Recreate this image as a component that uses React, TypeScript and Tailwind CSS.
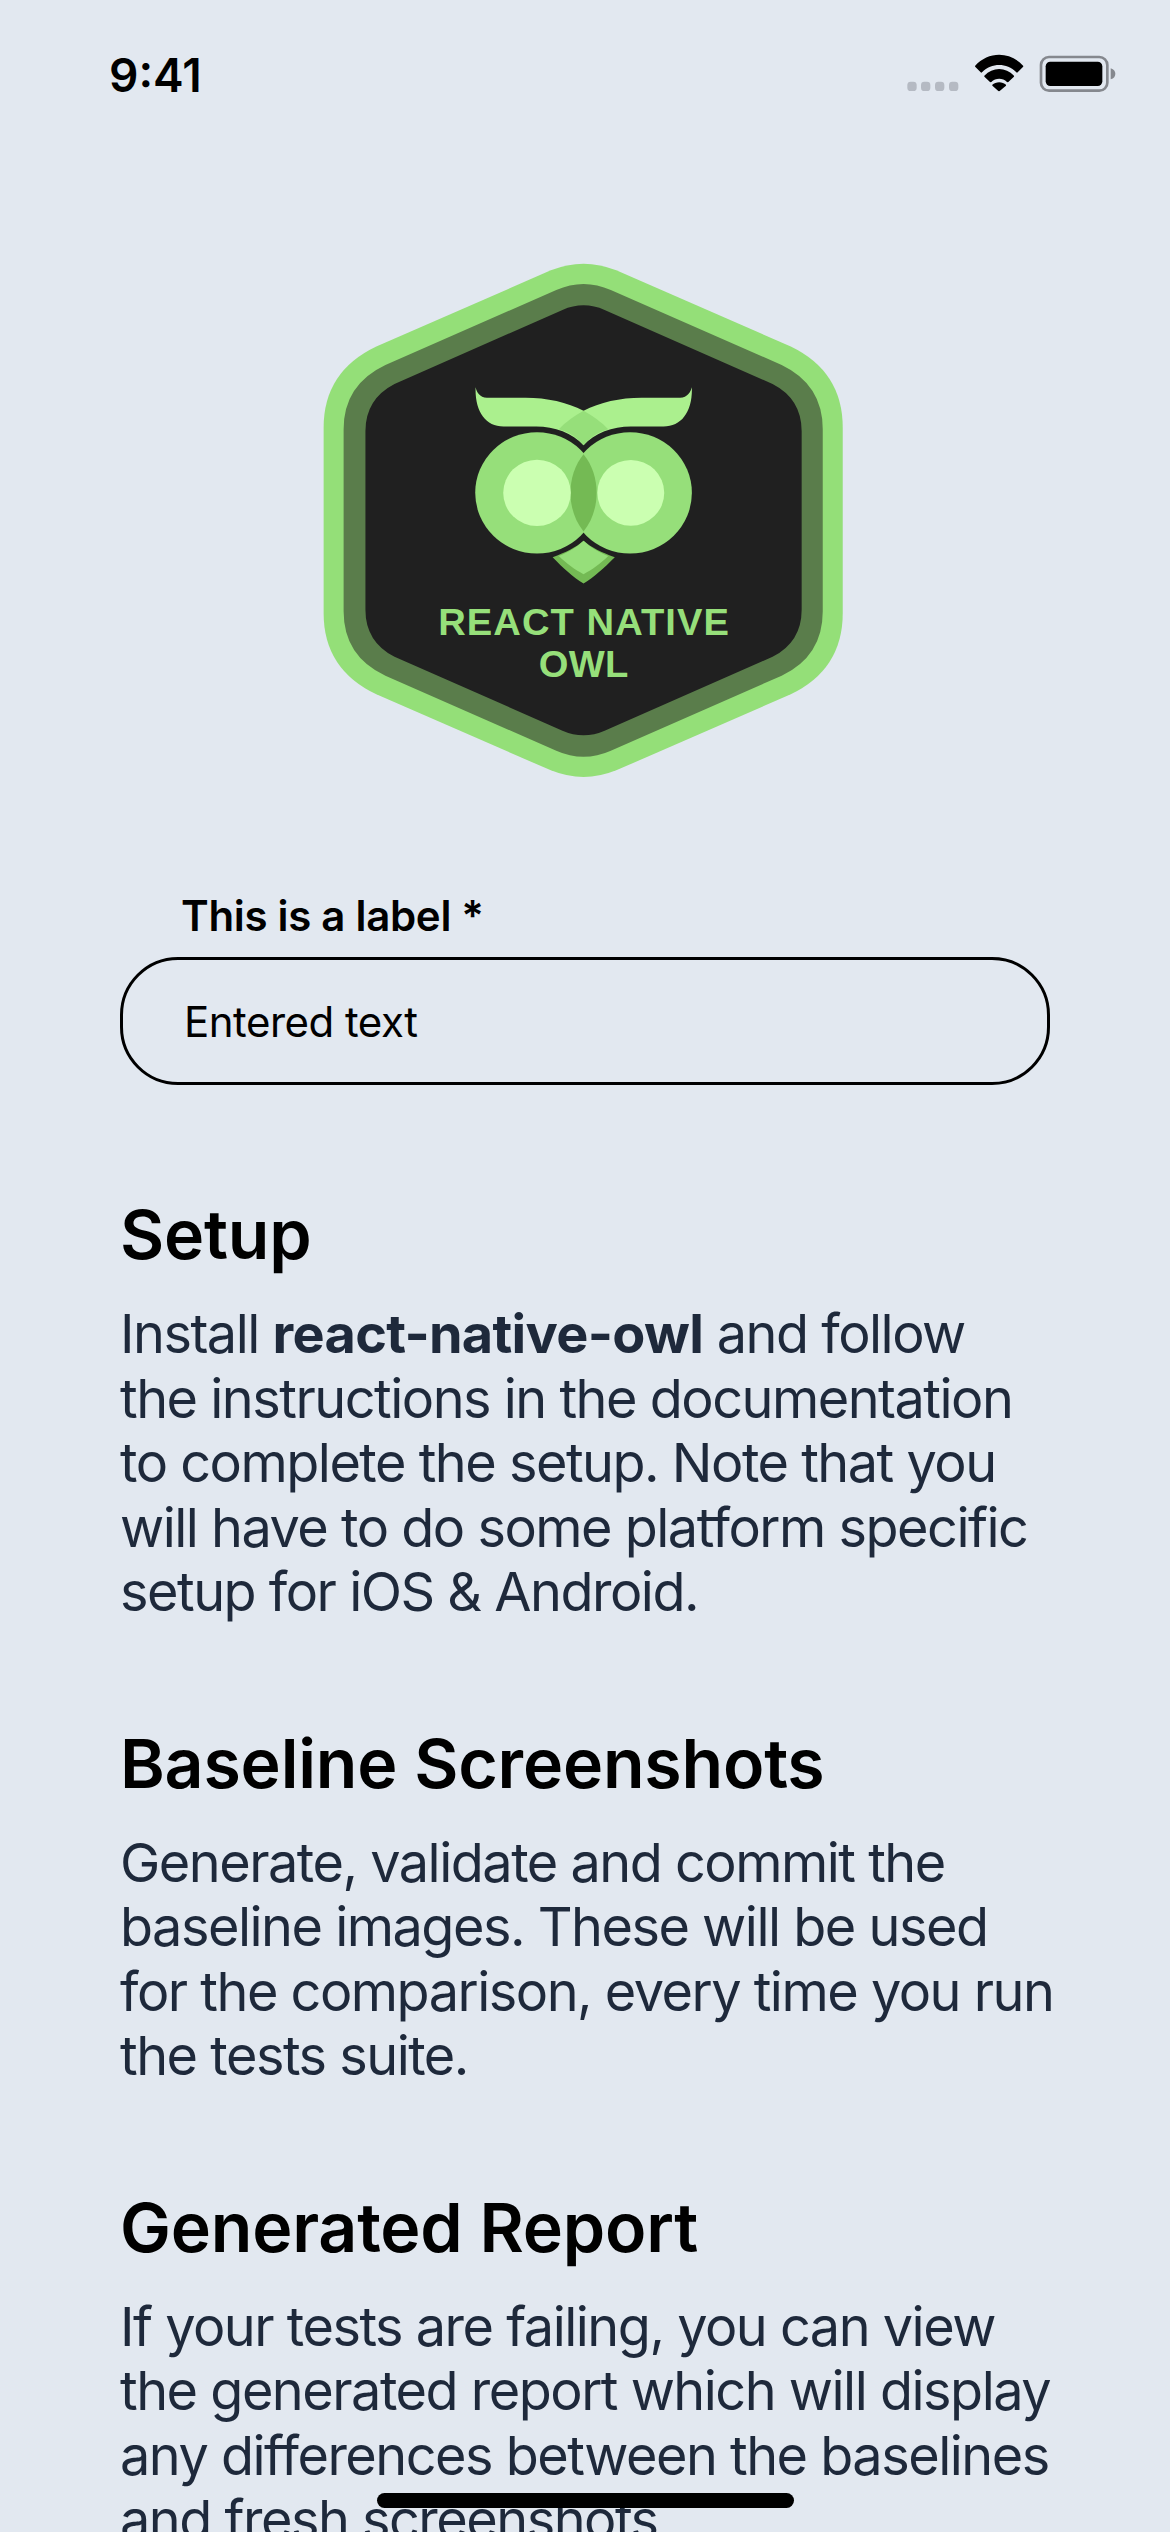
import React from "react"

function StatusIcons() {
  return (
    <svg width="280" height="80" viewBox="0 0 840 240" className="block">
      {/* signal dots */}
      <g fill="#B5BAC3">
        <rect x="142" y="155" width="28" height="28" rx="10" />
        <rect x="183" y="155" width="28" height="28" rx="10" />
        <rect x="225" y="155" width="28" height="28" rx="10" />
        <rect x="267" y="155" width="28" height="28" rx="10" />
      </g>
      {/* wifi */}
      <g fill="#000">
        <path d="M345 108 C385 63 450 63 490 108 Q490 110 488 112 L473 127 Q471 129 469 127 C440 98 395 98 366 127 Q364 129 362 127 L347 112 Q345 110 345 108Z" />
        <path d="M373 137 C398 110 437 110 462 137 Q463 139 461 141 L445 156 Q443 157 441 156 C428 143 407 143 394 156 Q392 157 390 156 L374 141 Q372 139 373 137Z" />
        <path d="M397 164 C407 154 428 154 438 164 Q439 166 437 168 L419 183 Q417 184 415 183 L398 168 Q396 166 397 164Z" />
      </g>
      {/* battery */}
      <rect x="543" y="81" width="199" height="101" rx="24" fill="none" stroke="#85888E" strokeWidth="8" />
      <rect x="557" y="95" width="170" height="73" rx="14" fill="#000" />
      <path d="M752 115 C762 118 766 124 766 131 C766 139 762 145 752 148Z" fill="#85888E" />
    </svg>
  )
}

function OwlBadge() {
  return (
    <svg width="570" height="560" viewBox="0 0 1568 1568" preserveAspectRatio="none" className="block">
      <path
        fill="#94DF78"
        d="M690 85 Q780 48 870 85 L1350 298 Q1493 368 1493 525 L1493 1045 Q1493 1202 1350 1272 L870 1485 Q780 1522 690 1485 L210 1272 Q65 1202 65 1045 L65 525 Q65 368 210 298Z"
      />
      <path
        fill="#5A7D4B"
        d="M705 140 Q780 106 855 140 L1325 350 Q1438 405 1438 530 L1438 1040 Q1438 1165 1325 1220 L855 1430 Q780 1464 705 1430 L235 1220 Q120 1165 120 1040 L120 530 Q120 405 235 350Z"
      />
      <path
        fill="#202020"
        d="M722 196 Q780 170 838 196 L1300 403 Q1380 445 1380 535 L1380 1035 Q1380 1125 1300 1167 L838 1374 Q780 1400 722 1374 L260 1167 Q180 1125 180 1035 L180 535 Q180 445 260 403Z"
      />

      {/* horns */}
      <path
        fill="#ABF08E"
        d="M483 412 C488 434 500 442 522 442 L620 442 C680 442 735 455 780 478 C825 455 880 442 940 442 L1038 442 C1060 442 1072 434 1078 412 C1080 480 1050 522 1000 522 L910 522 C860 522 810 540 780 575 C750 540 700 522 650 522 L560 522 C510 522 481 480 483 412Z"
      />
      <path
        fill="#96DF7A"
        d="M780 478 C755 492 730 510 712 530 C742 538 765 556 780 575 C795 556 818 538 848 530 C830 510 805 492 780 478Z"
      />

      {/* eyes */}
      <circle cx="652" cy="708" r="170" fill="#96DF7A" />
      <circle cx="908" cy="708" r="170" fill="#96DF7A" />
      <path fill="#74BA54" d="M780 600 C732 660 732 756 780 816 C828 756 828 660 780 600Z" />
      <circle cx="652" cy="708" r="93" fill="#CBFFB1" />
      <circle cx="910" cy="708" r="92" fill="#CBFFB1" />

      {/* beak */}
      <path
        fill="#74BA54"
        d="M695 888 C730 875 760 860 780 842 C800 860 830 875 866 888 C835 920 810 942 780 962 C750 942 725 920 695 888Z"
      />
      <path
        fill="#96DF7A"
        d="M712 885 C740 873 762 860 780 842 C798 860 820 873 848 885 C825 908 805 922 780 936 C755 922 735 908 712 885Z"
      />

      <text
        x="780"
        y="1105"
        textAnchor="middle"
        textLength="800"
        lengthAdjust="spacing"
        fill="#96DF7A"
        fontSize="105"
        fontWeight="700"
        fontFamily="'Liberation Sans', Arial, sans-serif"
      >
        REACT NATIVE
      </text>
      <text
        x="780"
        y="1225"
        textAnchor="middle"
        textLength="246"
        lengthAdjust="spacing"
        fill="#96DF7A"
        fontSize="105"
        fontWeight="700"
        fontFamily="'Liberation Sans', Arial, sans-serif"
      >
        OWL
      </text>
    </svg>
  )
}

function Section({ title, children }: { title: string; children: React.ReactNode }) {
  return (
    <section className="mb-[95px]">
      <h2 className="text-[68px] leading-[86px] tracking-[-0.2px] font-semibold text-black">{title}</h2>
      <p className="mt-[25px] text-[54px] leading-[64.5px] tracking-[-1.5px] text-[#1E293B] whitespace-nowrap">
        {children}
      </p>
    </section>
  )
}

export default function App() {
  return (
    <div className="relative w-[1170px] h-[2532px] overflow-hidden bg-[#E2E8F0] font-['Inter',sans-serif]">
      {/* status bar */}
      <div className="flex items-start justify-between h-[240px] pl-[109px]">
        <span className="mt-[46px] text-[46px] leading-[58px] font-semibold text-black">9:41</span>
        <div className="mt-[30px] mr-[30px]">
          <StatusIcons />
        </div>
      </div>

      <div className="flex justify-center">
        <OwlBadge />
      </div>

      <div className="px-[120px] pt-[91px]">
        <label className="block pl-[61px] text-[42px] leading-[50px] tracking-[-0.3px] font-semibold text-black">
          This is a label *
        </label>
        <div className="mt-[16px] flex items-center h-[128px] border-[3px] border-black rounded-[58px] pl-[61px] text-[42px] tracking-[-0.5px] text-black">
          Entered text
        </div>

        <div className="mt-[106px]">
          <Section title="Setup">
            Install <b className="font-bold tracking-[-0.7px]">react-native-owl</b> and follow
            <br />
            the instructions in the documentation
            <br />
            to complete the setup. Note that you
            <br />
            will have to do some platform specific
            <br />
            setup for iOS &amp; Android.
          </Section>
          <Section title="Baseline Screenshots">
            Generate, validate and commit the
            <br />
            baseline images. These will be used
            <br />
            for the comparison, every time you run
            <br />
            the tests suite.
          </Section>
          <Section title="Generated Report">
            If your tests are failing, you can view
            <br />
            the generated report which will display
            <br />
            any differences between the baselines
            <br />
            and fresh screenshots.
          </Section>
        </div>
      </div>

      {/* home indicator */}
      <div className="absolute left-[377px] bottom-[24px] w-[417px] h-[15px] rounded-full bg-black" />
    </div>
  )
}
